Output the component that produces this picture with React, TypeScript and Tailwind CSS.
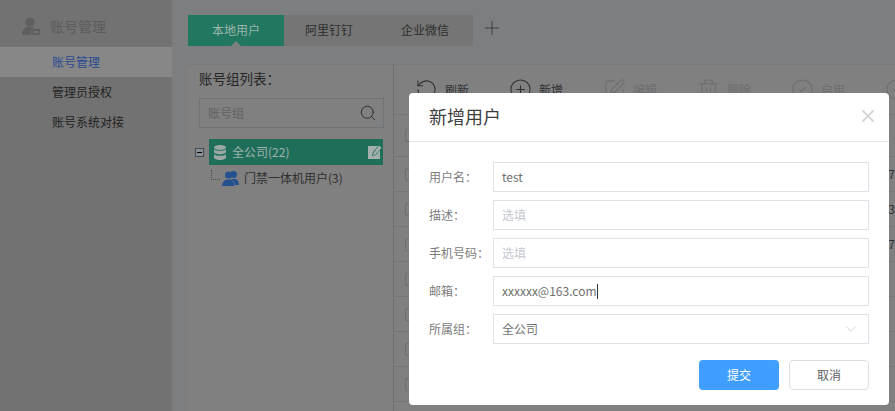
import { ChevronDown, CircleCheck, CirclePlus, Plus, RotateCcw, Search, SquarePen, Trash2, X } from 'lucide-react';

const font = { fontFamily: '"Noto Sans CJK SC", "Liberation Sans", sans-serif' };

const menuItems = ['账号管理', '管理员授权', '账号系统对接'];
const tableRows = ['7', '3', '7', '', '', '', '', ''];

function AdminIcon() {
  return (
    <svg width="18" height="18" viewBox="0 0 18 18" fill="#5f5f5f">
      <circle cx="8" cy="5" r="4.5" />
      <path d="M0 18c0-5 2.5-7.5 5.5-8h5c1 .2 1.8.6 2.5 1.2H9.5V18z" />
      <path d="M10 12h8v6h-8z" />
      <path d="M12 14h4v2h-4z" fill="#737373" />
    </svg>
  );
}

function DatabaseIcon() {
  return (
    <svg width="14" height="15" viewBox="0 0 14 15" fill="#9aa9a5">
      <ellipse cx="7" cy="2.5" rx="6" ry="2.5" />
      <path d="M1 4.2c1.2 1 3.2 1.5 6 1.5s4.800-.5 6-1.500V7c0 1.300-2.700 2.200-6 2.200S1 8.300 1 7z" />
      <path d="M1 9.200c1.200 1 3.200 1.500 6 1.500s4.800-.5 6-1.500V12.500C13 13.800 10.300 15 7 15s-6-1.200-6-2.500z" />
    </svg>
  );
}

function NoteIcon() {
  return (
    <svg width="14" height="14" viewBox="0 0 14 14">
      <path d="M0 1h10L5 7l-1 4 4-1 4-5v9H0z" fill="#a3b0ad" />
      <path d="M11 .5 13.500 3 7.500 9.500 5 10.300l.8-2.800z" fill="#a3b0ad" />
    </svg>
  );
}

function UsersIcon() {
  return (
    <svg width="17" height="15" viewBox="0 0 17 15" fill="#23518f">
      <circle cx="11.500" cy="3.500" r="3.500" />
      <path d="M9 8h5c1.700.7 2.800 3 3 6h-4c-.4-2.500-1.800-4.500-4-6z" />
      <circle cx="6.500" cy="4" r="3.500" />
      <path d="M4 8.500h5c2 .8 3.300 3.200 3.500 6.500H0c.2-3.300 2-5.700 4-6.500z" />
    </svg>
  );
}

function TreeSwitch() {
  return (
    <span className="flex h-[9px] w-[9px] items-center justify-center border border-[#3f4c5c] bg-[#8a8f94]">
      <span className="h-px w-[5px] bg-black" />
    </span>
  );
}

function Tool({ icon, label, dim }: { icon: React.ReactNode; label: string; dim?: boolean }) {
  return (
    <div className={`flex w-[94px] shrink-0 items-center gap-[7px] ${dim ? 'text-[#6b6d6f]' : 'text-[#2f3133]'}`}>
      {icon}
      <span className="text-xs">{label}</span>
    </div>
  );
}

function Field({ label, children }: { label: string; children: React.ReactNode }) {
  return (
    <div className="flex h-[30px] items-center">
      <label className="w-[64px] shrink-0 text-xs text-[#7c7c7c]">{label}</label>
      <div className="flex h-full flex-1 items-center border border-[#dfe1e8] px-2 text-xs text-[#6f6f6f]">
        {children}
      </div>
    </div>
  );
}

export default function App() {
  return (
    <div className="relative flex h-[411px] w-[895px] overflow-hidden bg-[#7c7e80]" style={font}>
      {/* Sidebar */}
      <aside className="w-[172px] shrink-0 bg-[#727272]">
        <div className="flex h-[47px] items-center gap-[10px] pt-[4px] pl-[22px] text-sm text-[#5c5c5c]">
          <AdminIcon />
          <span>账号管理</span>
        </div>
        {menuItems.map((item, i) => (
          <div
            key={item}
            className={`flex h-[30px] items-center pb-[1px] pl-[52px] text-xs ${
              i === 0 ? 'bg-[#878787] text-[#2b4a93]' : 'text-[#222222]'
            }`}
          >
            {item}
          </div>
        ))}
      </aside>

      {/* Main */}
      <main className="flex min-w-0 flex-1 flex-col overflow-hidden pt-[15px] pl-4">
        <div className="flex h-[31px] shrink-0 items-center">
          <div className="relative flex h-full w-[96px] items-center justify-center pb-[1px] bg-[#21775f] text-xs text-[#9eb5ad]">
            本地用户
            <span className="absolute bottom-0 left-[43px] h-0 w-0 border-x-[5px] border-b-[5px] border-x-transparent border-b-[#7c7e80]" />
          </div>
          <div className="flex h-full w-[90px] items-center justify-center bg-[#757575] pb-[1px] text-xs text-[#2d2d2d]">阿里钉钉</div>
          <div className="flex h-full w-[99px] items-center justify-center bg-[#757575] pb-[1px] pl-[3px] text-xs text-[#2d2d2d]">企业微信</div>
          <Plus size={22} strokeWidth={1} className="ml-[8px] -translate-y-[3px] text-[#343a40]" />
        </div>

        <div className="mt-[18px] flex shrink-0 border-t border-[#77797b] pl-px">
          {/* Group tree */}
          <section className="h-[360px] w-[205px] shrink-0 border-r border-[#6d6f71] bg-[#808080] px-[10px]">
            <h3 className="mt-[1px] text-[13.500px] leading-[24px] font-normal text-[#262626]">账号组列表：</h3>
            <div className="mt-[8px] flex h-[30px] w-[185px] items-center justify-between border border-[#6f7478] pr-[6px] pl-[8px] text-xs text-[#5f6264]">
              <span>账号组</span>
              <Search size={18} strokeWidth={1.200} className="text-[#24272a]" />
            </div>
            <div className="mt-[11px] -ml-[4px] flex items-center gap-[5px]">
              <TreeSwitch />
              <div className="flex h-[26px] w-[174px] items-center justify-between bg-[#1f6e5a] pr-[1px] pl-[4px]">
                <div className="flex items-center gap-[5px] text-xs text-[#a0b3ad]">
                  <DatabaseIcon />
                  <span>全公司(22)</span>
                </div>
                <NoteIcon />
              </div>
            </div>
            <div className="mt-[1px] flex h-[24px] items-center pl-[12px]">
              <span className="mb-[6px] h-[10px] w-[9px] border-b border-l border-dotted border-[#4d4d4d]" />
              <span className="ml-[2px] flex items-center gap-[5px] text-xs text-[#2f2f2f]">
                <UsersIcon />
                门禁一体机用户(3)
              </span>
            </div>
          </section>

          {/* Table */}
          <section className="min-w-0 flex-1 bg-[#808080]">
            <div className="flex h-[50px] items-center gap-0 overflow-hidden border-b border-[#737577] pl-[21px]">
              <Tool icon={<RotateCcw size={23} strokeWidth={1.100} />} label="刷新" />
              <Tool icon={<CirclePlus size={23} strokeWidth={1.100} />} label="新增" />
              <Tool icon={<SquarePen size={23} strokeWidth={1.100} />} label="编辑" dim />
              <Tool icon={<Trash2 size={23} strokeWidth={1.100} />} label="删除" dim />
              <Tool icon={<CircleCheck size={23} strokeWidth={1.100} />} label="启用" dim />
              <CircleCheck size={23} strokeWidth={1.100} className="shrink-0 text-[#6b6d6f]" />
            </div>
            <div className="flex h-[42px] items-center border-b border-[#737577] pl-[11px]">
              <span className="h-[13px] w-[9px] rounded-[2px] border border-[#6c6e70]" />
            </div>
            {tableRows.map((value, i) => (
              <div key={i} className="flex h-[35px] items-center justify-between border-b border-[#737577] pl-[11px]">
                <span className="h-[13px] w-[9px] rounded-[2px] border border-[#6c6e70]" />
                <span className="text-xs text-[#2f3133]">{value}</span>
              </div>
            ))}
          </section>
        </div>
      </main>

      {/* Dialog */}
      <div className="absolute top-[93px] left-[409px] h-[312px] w-[480px] rounded bg-white">
        <div className="flex h-[49px] items-center justify-between border-b border-[#e4e6ec] pr-[11px] pb-[2px] pl-[20px]">
          <h2 className="text-lg font-normal text-[#3f3f3f]">新增用户</h2>
          <X size={20} strokeWidth={2.400} className="text-[#d6d6d6]" />
        </div>
        <div className="flex flex-col gap-2 px-[20px] pt-[20px]">
          <Field label="用户名：">test</Field>
          <Field label="描述：">
            <span className="text-[#c6c8d0]">选填</span>
          </Field>
          <Field label="手机号码：">
            <span className="text-[#c6c8d0]">选填</span>
          </Field>
          <Field label="邮箱：">
            xxxxxx@163.com
            <span className="h-[15px] w-px bg-[#333333]" />
          </Field>
          <Field label="所属组：">
            <span className="flex-1">全公司</span>
            <ChevronDown size={18} strokeWidth={1} className="text-[#c6c8d0]" />
          </Field>
        </div>
        <div className="mt-4 flex justify-end gap-[10px] px-[20px]">
          <button className="h-[30px] w-[80px] rounded-[4px] bg-[#409eff] text-xs text-white">提交</button>
          <button className="h-[30px] w-[80px] rounded-[4px] border border-[#dcdfe6] bg-white text-xs text-[#606266]">取消</button>
        </div>
      </div>
    </div>
  );
}
